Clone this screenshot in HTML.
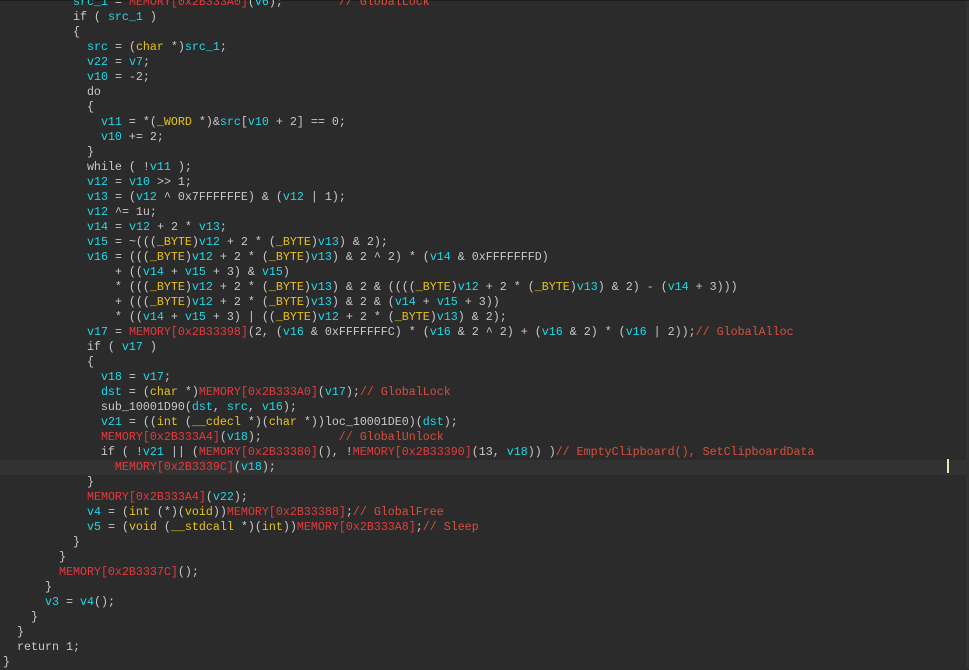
<!DOCTYPE html>
<html><head><meta charset="utf-8"><style>
html,body{margin:0;padding:0;}
body{width:969px;height:669px;background:#2b2b2b;overflow:hidden;position:relative;}
#code{position:absolute;left:3px;top:-5.5px;font-family:"Liberation Mono",monospace;font-size:11.67px;line-height:15px;color:#c8c8c8;white-space:pre;margin:0;}
.c{color:#1fd8e6}.r{color:#e8393c}.m{color:#d8503c}.y{color:#e8c21a}
#hl{position:absolute;left:0;top:459.5px;width:966px;height:15px;background:#323232;}
#cur{position:absolute;left:947px;top:459px;width:2px;height:14px;background:#f0e6b0;}
#rs{position:absolute;right:0;top:0;width:3px;height:669px;background:#323232;}
#tp{position:absolute;left:0;top:0;width:969px;height:1px;background:#1e1e1e;}
</style></head><body>
<div id="hl"></div><div id="rs"></div><div id="tp"></div>
<pre id="code">          <span class="c">src_1</span> = <span class="r">MEMORY[0x2B333A0]</span>(<span class="c">v6</span>);        <span class="m">// GlobalLock</span>
          if ( <span class="c">src_1</span> )
          {
            <span class="c">src</span> = (<span class="y">char</span> *)<span class="c">src_1</span>;
            <span class="c">v22</span> = <span class="c">v7</span>;
            <span class="c">v10</span> = -2;
            do
            {
              <span class="c">v11</span> = *(<span class="y">_WORD</span> *)&amp;<span class="c">src</span>[<span class="c">v10</span> + 2] == 0;
              <span class="c">v10</span> += 2;
            }
            while ( !<span class="c">v11</span> );
            <span class="c">v12</span> = <span class="c">v10</span> &gt;&gt; 1;
            <span class="c">v13</span> = (<span class="c">v12</span> ^ 0x7FFFFFFE) &amp; (<span class="c">v12</span> | 1);
            <span class="c">v12</span> ^= 1u;
            <span class="c">v14</span> = <span class="c">v12</span> + 2 * <span class="c">v13</span>;
            <span class="c">v15</span> = ~(((<span class="y">_BYTE</span>)<span class="c">v12</span> + 2 * (<span class="y">_BYTE</span>)<span class="c">v13</span>) &amp; 2);
            <span class="c">v16</span> = (((<span class="y">_BYTE</span>)<span class="c">v12</span> + 2 * (<span class="y">_BYTE</span>)<span class="c">v13</span>) &amp; 2 ^ 2) * (<span class="c">v14</span> &amp; 0xFFFFFFFD)
                + ((<span class="c">v14</span> + <span class="c">v15</span> + 3) &amp; <span class="c">v15</span>)
                * (((<span class="y">_BYTE</span>)<span class="c">v12</span> + 2 * (<span class="y">_BYTE</span>)<span class="c">v13</span>) &amp; 2 &amp; ((((<span class="y">_BYTE</span>)<span class="c">v12</span> + 2 * (<span class="y">_BYTE</span>)<span class="c">v13</span>) &amp; 2) - (<span class="c">v14</span> + 3)))
                + (((<span class="y">_BYTE</span>)<span class="c">v12</span> + 2 * (<span class="y">_BYTE</span>)<span class="c">v13</span>) &amp; 2 &amp; (<span class="c">v14</span> + <span class="c">v15</span> + 3))
                * ((<span class="c">v14</span> + <span class="c">v15</span> + 3) | ((<span class="y">_BYTE</span>)<span class="c">v12</span> + 2 * (<span class="y">_BYTE</span>)<span class="c">v13</span>) &amp; 2);
            <span class="c">v17</span> = <span class="r">MEMORY[0x2B33398]</span>(2, (<span class="c">v16</span> &amp; 0xFFFFFFFC) * (<span class="c">v16</span> &amp; 2 ^ 2) + (<span class="c">v16</span> &amp; 2) * (<span class="c">v16</span> | 2));<span class="m">// GlobalAlloc</span>
            if ( <span class="c">v17</span> )
            {
              <span class="c">v18</span> = <span class="c">v17</span>;
              <span class="c">dst</span> = (<span class="y">char</span> *)<span class="r">MEMORY[0x2B333A0]</span>(<span class="c">v17</span>);<span class="m">// GlobalLock</span>
              sub_10001D90(<span class="c">dst</span>, <span class="c">src</span>, <span class="c">v16</span>);
              <span class="c">v21</span> = ((<span class="y">int</span> (<span class="y">__cdecl</span> *)(<span class="y">char</span> *))loc_10001DE0)(<span class="c">dst</span>);
              <span class="r">MEMORY[0x2B333A4]</span>(<span class="c">v18</span>);           <span class="m">// GlobalUnlock</span>
              if ( !<span class="c">v21</span> || (<span class="r">MEMORY[0x2B33380]</span>(), !<span class="r">MEMORY[0x2B33390]</span>(13, <span class="c">v18</span>)) )<span class="m">// EmptyClipboard(), SetClipboardData</span>
                <span class="r">MEMORY[0x2B3339C]</span>(<span class="c">v18</span>);
            }
            <span class="r">MEMORY[0x2B333A4]</span>(<span class="c">v22</span>);
            <span class="c">v4</span> = (<span class="y">int</span> (*)(<span class="y">void</span>))<span class="r">MEMORY[0x2B33388]</span>;<span class="m">// GlobalFree</span>
            <span class="c">v5</span> = (<span class="y">void</span> (<span class="y">__stdcall</span> *)(<span class="y">int</span>))<span class="r">MEMORY[0x2B333A8]</span>;<span class="m">// Sleep</span>
          }
        }
        <span class="r">MEMORY[0x2B3337C]</span>();
      }
      <span class="c">v3</span> = <span class="c">v4</span>();
    }
  }
  return 1;
}</pre>
<div id="cur"></div>
</body></html>
